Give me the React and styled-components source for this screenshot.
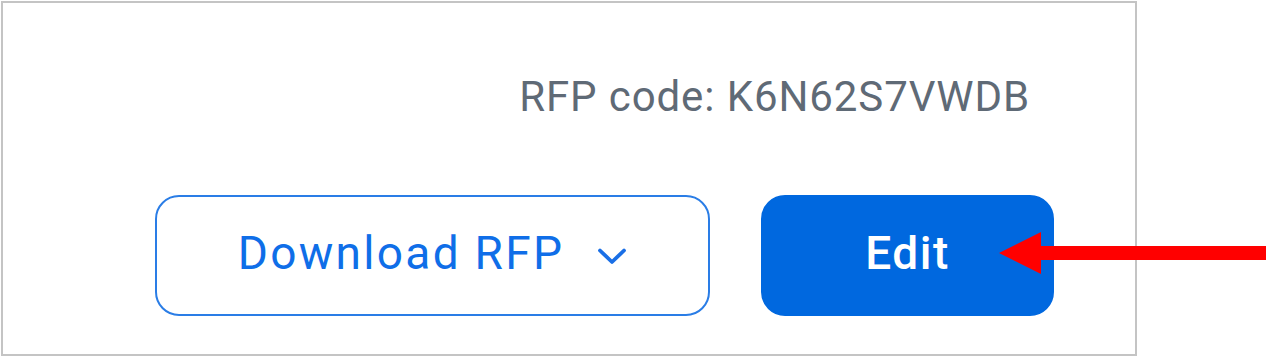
import React from "react";
import styled, { createGlobalStyle } from "styled-components";

const GlobalStyle = createGlobalStyle`
  html, body { margin: 0; padding: 0; background: #ffffff; }
  body { font-family: Roboto, "Liberation Sans", Arial, sans-serif; }
  * { box-sizing: border-box; }
`;

const Page = styled.div`
  position: relative;
  width: 1266px;
  height: 357px;
  padding: 1px;
  background: #ffffff;
`;

const Frame = styled.section`
  width: 1136px;
  height: 355px;
  border: 2px solid #c4c4c4;
  display: flex;
  flex-direction: column;
  align-items: flex-end;
  padding: 70px 81px 0 0;
`;

const CodeLine = styled.div`
  font-size: 42px;
  line-height: 48px;
  letter-spacing: 0.9px;
  color: #5f6a76;
  margin-right: 24px;
  white-space: nowrap;
`;

const Actions = styled.div`
  display: flex;
  gap: 51px;
  margin-top: 74px;
`;

const Button = styled.button`
  height: 121px;
  width: ${(p) => p.$width}px;
  border-radius: 24px;
  font-family: Roboto, "Liberation Sans", Arial, sans-serif;
  font-size: 46px;
  letter-spacing: ${(p) => (p.$primary ? "1.5px" : "2.3px")};
  font-weight: ${(p) => (p.$primary ? 500 : 400)};
  display: flex;
  align-items: center;
  justify-content: center;
  gap: 33px;
  cursor: pointer;
  padding: 0 0 6px 0;
  border: 2px solid ${(p) => (p.$primary ? "#0068df" : "#2a7de6")};
  background: ${(p) => (p.$primary ? "#0068df" : "#ffffff")};
  color: ${(p) => (p.$primary ? "#ffffff" : "#0f6ee8")};
`;

const Chevron = styled.svg`
  width: 30px;
  height: 19px;
  margin-top: 8px;
`;

const Arrow = styled.svg`
  position: absolute;
  left: 997px;
  top: 230px;
  width: 269px;
  height: 46px;
`;

export default function App() {
  return (
    <>
      <GlobalStyle />
      <Page>
        <Frame>
          <CodeLine>RFP code: K6N62S7VWDB</CodeLine>
          <Actions>
            <Button $width={555}>
              <span>Download RFP</span>
              <Chevron viewBox="0 0 30 19" fill="none">
                <path d="M3 3.5 L15 15 L27 3.5" stroke="#1a6fe6" strokeWidth="3.8" strokeLinecap="round" strokeLinejoin="round" />
              </Chevron>
            </Button>
            <Button $primary $width={293}>Edit</Button>
          </Actions>
        </Frame>
        <Arrow viewBox="0 0 269 46">
          <polygon points="2,23 44,2 44,16 269,16 269,30 44,30 44,44" fill="#ff0000" />
        </Arrow>
      </Page>
    </>
  );
}
